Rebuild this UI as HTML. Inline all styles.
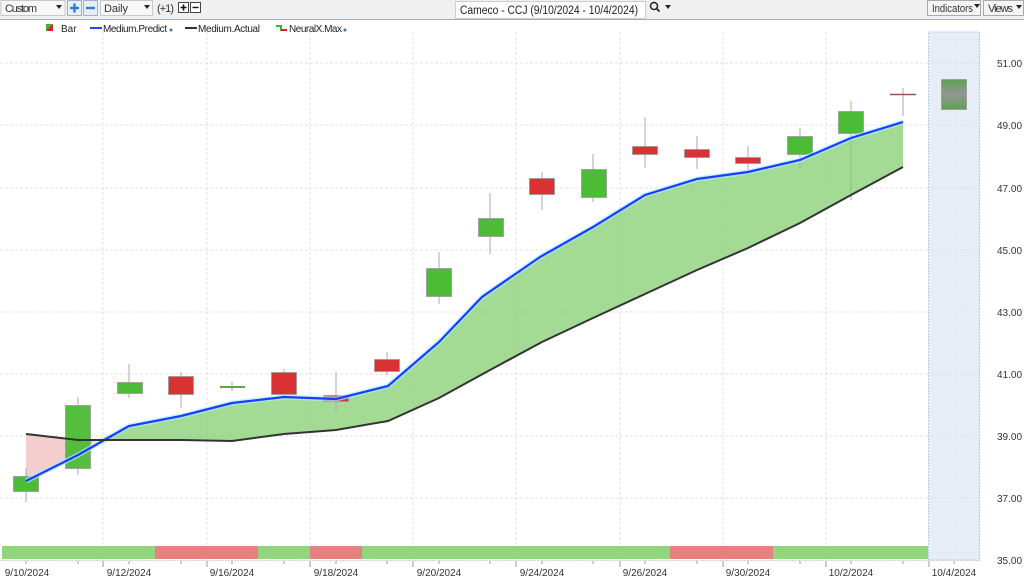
<!DOCTYPE html>
<html><head><meta charset="utf-8"><style>
body{margin:0;width:1024px;height:584px;overflow:hidden;background:#fff;font-family:"Liberation Sans",sans-serif;}
svg{position:absolute;left:0;top:0}
</style></head><body>
<svg width="1024" height="584" xmlns="http://www.w3.org/2000/svg" font-family="Liberation Sans, sans-serif">
<defs><pattern id="hatch" width="3" height="3" patternUnits="userSpaceOnUse"><rect width="3" height="3" fill="#e8eef6"/><rect width="1" height="1" fill="#dde5f0"/></pattern>
<linearGradient id="fg" x1="0" y1="0" x2="0" y2="1"><stop offset="0" stop-color="#5fa04f"/><stop offset="0.5" stop-color="#959595"/><stop offset="1" stop-color="#5fa04f"/></linearGradient></defs>
<!-- toolbar -->
<rect x="0" y="0" width="1024" height="19" fill="#f0f0f0"/>
<line x1="0" y1="19.5" x2="1024" y2="19.5" stroke="#7fb6e6"/>
<rect x="1" y="0.5" width="64" height="15" fill="#f7f7f7" stroke="#c8c8c8"/>
<text x="5" y="12" font-size="11" fill="#333" textLength="32">Custom</text><path d="M56 5h6l-3 4z" fill="#222"/>
<rect x="67.5" y="0.5" width="14" height="15" fill="#e8eef6" stroke="#aac"/><path d="M70 8h9M74.5 3.5v9" stroke="#2a7fd4" stroke-width="2.4"/>
<rect x="83.5" y="0.5" width="14" height="15" fill="#e8eef6" stroke="#aac"/><path d="M86 8h9" stroke="#2a7fd4" stroke-width="2.4"/>
<rect x="100.5" y="0.5" width="52" height="15" fill="#f7f7f7" stroke="#c8c8c8"/>
<text x="104" y="12" font-size="11" fill="#333" textLength="24">Daily</text><path d="M144 5h6l-3 4z" fill="#222"/>
<text x="157" y="12" font-size="11" fill="#333" textLength="17">(+1)</text>
<rect x="178.5" y="2.5" width="10" height="10" fill="#fff" stroke="#444"/><path d="M180.5 7.5h6M183.5 4.5v6" stroke="#111" stroke-width="1.6"/>
<rect x="190.5" y="2.5" width="10" height="10" fill="#fff" stroke="#444"/><path d="M192.5 7.5h6" stroke="#111" stroke-width="1.4"/>
<rect x="455.5" y="1.5" width="190" height="17" fill="#fff" stroke="#ccc"/>
<text x="460" y="14" font-size="11.5" fill="#222" textLength="178" lengthAdjust="spacingAndGlyphs">Cameco - CCJ (9/10/2024 - 10/4/2024)</text>
<circle cx="654" cy="6" r="3.5" fill="none" stroke="#222" stroke-width="1.5"/><path d="M656.5 8.5l3 3" stroke="#222" stroke-width="1.8"/><path d="M665 5h6l-3 4z" fill="#222"/>
<rect x="927.5" y="0.5" width="53" height="15" fill="#f4f4f4" stroke="#aaa"/><text x="932" y="12" font-size="11" fill="#333" textLength="41" lengthAdjust="spacingAndGlyphs">Indicators</text><path d="M974 4h6l-3 4z" fill="#222"/>
<rect x="983.5" y="0.5" width="40" height="15" fill="#f4f4f4" stroke="#aaa"/><text x="988" y="12" font-size="11" fill="#333" textLength="25">Views</text><path d="M1016 5h6l-3 4z" fill="#222"/>
<!-- legend -->
<path d="M46 24h7v7h-7z" fill="#3cb43c"/><path d="M53 24v7h-7z" fill="#d22"/>
<text x="61" y="32" font-size="10" fill="#222">Bar</text>
<path d="M90 28h12" stroke="#2244ff" stroke-width="2"/><text x="103" y="32" font-size="10" fill="#222" textLength="64">Medium.Predict</text><circle cx="171" cy="30" r="1.5" fill="#3a7aa0"/>
<path d="M185 28h12" stroke="#333" stroke-width="2"/><text x="198" y="32" font-size="10" fill="#222" textLength="62">Medium.Actual</text>
<path d="M276 26h5v4h6" stroke="#3cb43c" stroke-width="2" fill="none"/><path d="M281 30h6" stroke="#d22" stroke-width="2"/>
<text x="289" y="32" font-size="10" fill="#222" textLength="53">NeuralX.Max</text><circle cx="345" cy="30" r="1.5" fill="#3a7aa0"/>
<!-- forecast shade -->
<rect x="928.5" y="32" width="51" height="528" fill="url(#hatch)" stroke="#b8cbe0" stroke-dasharray="2 1"/>
<!-- grid -->
<g stroke="#e0e0e0" stroke-dasharray="3 2">
<path d="M0 63h980M0 125h980M0 188h980M0 250h980M0 312h980M0 374h980M0 436h980M0 498h980"/>
<path d="M103 32v528M207 32v528M310 32v528M413 32v528M516 32v528M620 32v528M723 32v528M826 32v528"/>
</g>
<!-- fills -->
<path d="M26 434 L78 440 L96 441 L78 455 L26 481Z" fill="#f2c4c4" opacity="0.85"/>
<path d="M96 441 L129 440 L181 440 L232 441 L284 434 L336 430 L388 421 L439 398 L490 370 L542 342 L593 318 L645 294 L697 270 L748 248 L800 223 L851 195 L903 167 L903 122 L851 138 L800 160 L748 172 L697 179 L645 195 L593 227 L540 257 L482 297 L439 342 L388 386 L336 399 L284 397 L232 403 L181 416 L129 426Z" fill="#8cd27a" opacity="0.8"/>
<!-- candles -->
<g stroke="#aaa" stroke-width="1">
<path d="M26 468V502M78 397V475M129 364V398M181 372V408M232 382V391M284 369V398M336 372V412M387 352V375M439 252V304M490 193V254M542 172V210M593 154V202M645 117V168M697 136V169M748 146V175M800 128V168M903 88V116"/>
<path d="M851 101V200" stroke="#8cc47c"/>
</g>
<g stroke="#999" stroke-width="0.8">
<rect x="13.5" y="476.5" width="25" height="15" fill="#4cbb35"/>
<rect x="65.5" y="405.5" width="25" height="63" fill="#4cbb35" fill-opacity="0.95"/>
<rect x="117.5" y="382.5" width="25" height="11" fill="#4cbb35"/>
<rect x="168.5" y="376.5" width="25" height="18" fill="#d93232"/>
<rect x="220" y="386" width="25" height="2" fill="#5aa84a" stroke="none"/>
<rect x="271.5" y="372.5" width="25" height="22" fill="#d93232"/>
<rect x="323.5" y="395.5" width="25" height="6" fill="#d93232"/>
<rect x="374.5" y="359.5" width="25" height="12" fill="#d93232"/>
<rect x="426.5" y="268.5" width="25" height="28" fill="#4cbb35"/>
<rect x="478.5" y="218.5" width="25" height="18" fill="#4cbb35"/>
<rect x="529.5" y="178.5" width="25" height="16" fill="#d93232"/>
<rect x="581.5" y="169.5" width="25" height="28" fill="#4cbb35"/>
<rect x="632.5" y="146.5" width="25" height="8" fill="#d93232"/>
<rect x="684.5" y="149.5" width="25" height="8" fill="#d93232"/>
<rect x="735.5" y="157.5" width="25" height="6" fill="#d93232"/>
<rect x="787.5" y="136.5" width="25" height="18" fill="#4cbb35"/>
<rect x="838.5" y="111.5" width="25" height="22" fill="#4cbb35"/>
<rect x="941.5" y="79.5" width="25" height="30" fill="url(#fg)"/>
</g>
<path d="M890 94.5h26" stroke="#a05050" stroke-width="1.5"/>
<!-- lines -->
<polyline points="26,481 78,455 129,426 181,416 232,403 284,397 336,399 388,386 439,342 482,297 540,257 593,227 645,195 697,179 748,172 800,160 851,138 903,122" fill="none" stroke="#9ff4ff" stroke-width="5" opacity="0.7"/>
<polyline points="26,481 78,455 129,426 181,416 232,403 284,397 336,399 388,386 439,342 482,297 540,257 593,227 645,195 697,179 748,172 800,160 851,138 903,122" fill="none" stroke="#2238ff" stroke-width="2.2"/>
<polyline points="26,434 78,440 129,440 181,440 232,441 284,434 336,430 388,421 439,398 490,370 542,342 593,318 645,294 697,270 748,248 800,223 851,195 903,167" fill="none" stroke="#333" stroke-width="2"/>
<!-- band -->
<rect x="2" y="546" width="153" height="13" fill="#8fd67d"/><rect x="155" y="546" width="103" height="13" fill="#e88080"/>
<rect x="258" y="546" width="52" height="13" fill="#8fd67d"/><rect x="310" y="546" width="52" height="13" fill="#e88080"/>
<rect x="362" y="546" width="308" height="13" fill="#8fd67d"/><rect x="670" y="546" width="103" height="13" fill="#e88080"/>
<rect x="773" y="546" width="155" height="13" fill="#8fd67d"/>
<path d="M0 560.5h980" stroke="#c8d4e0" stroke-dasharray="2 1"/>
<g stroke="#999"><path d="M26 561v3M78 561v3M129 561v3M181 561v3M232 561v3M284 561v3M336 561v3M387 561v3M439 561v3M490 561v3M542 561v3M593 561v3M645 561v3M697 561v3M748 561v3M800 561v3M851 561v3M903 561v3M954 561v3M103 561v6M207 561v6M310 561v6M413 561v6M516 561v6M620 561v6M723 561v6M826 561v6M929 561v6"/></g>
<g font-size="10" fill="#333" text-anchor="middle">
<text x="27" y="576">9/10/2024</text><text x="129" y="576">9/12/2024</text><text x="232" y="576">9/16/2024</text><text x="336" y="576">9/18/2024</text><text x="439" y="576">9/20/2024</text><text x="542" y="576">9/24/2024</text><text x="645" y="576">9/26/2024</text><text x="748" y="576">9/30/2024</text><text x="851" y="576">10/2/2024</text><text x="954" y="576">10/4/2024</text>
</g>
<g font-size="10" fill="#333">
<text x="997" y="67">51.00</text><text x="997" y="129">49.00</text><text x="997" y="192">47.00</text><text x="997" y="254">45.00</text><text x="997" y="316">43.00</text><text x="997" y="378">41.00</text><text x="997" y="440">39.00</text><text x="997" y="502">37.00</text><text x="997" y="564">35.00</text>
</g>
</svg>
</body></html>
